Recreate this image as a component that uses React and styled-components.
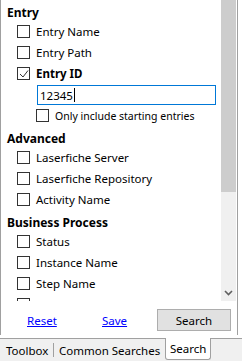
import React from 'react';
import styled, { createGlobalStyle } from 'styled-components';

const GlobalStyle = createGlobalStyle`
  html, body {
    margin: 0;
    padding: 0;
    background: #fff;
  }
  body {
    font-family: "Noto Sans", "Liberation Sans", sans-serif;
    font-size: 11.5px;
    color: #000;
  }
`;

const Frame = styled.div`
  width: 242px;
  height: 361px;
  display: flex;
  flex-direction: column;
  background: #fff;
  overflow: hidden;
`;

const Panel = styled.div`
  height: 335px;
  margin-right: 4px;
  display: flex;
  flex-direction: column;
  border-left: 1px solid #a0a0a0;
  border-right: 1px solid #a0a0a0;
`;

const ScrollArea = styled.div`
  height: 301px;
  display: flex;
`;

const Content = styled.div`
  flex: 1;
  overflow: hidden;
  padding-top: 4px;
`;

const GroupTitle = styled.div`
  font-weight: bold;
  font-size: 12px;
  line-height: 17px;
  padding-left: 6px;
  margin-top: ${(p) => (p.first ? '0' : '4px')};
`;

const Row = styled.label`
  display: flex;
  align-items: center;
  height: 21px;
  padding-left: ${(p) => (p.indent ? '35px' : '16px')};
  font-size: ${(p) => (p.small ? '10.5px' : '11.5px')};
  font-weight: ${(p) => (p.bold ? 'bold' : 'normal')};
  white-space: nowrap;
`;

const Box = styled.span`
  width: 11px;
  height: 11px;
  border: 1px solid #333;
  background: #fff;
  margin-right: 6px;
  flex: none;
  display: flex;
  align-items: center;
  justify-content: center;
`;

const TextBox = styled.div`
  margin: 1px 0 0 36px;
  width: 175px;
  height: 18px;
  border: 1px solid #0078d7;
  display: flex;
  align-items: center;
  padding-left: 2px;
  font-size: 11.5px;
`;

const Caret = styled.span`
  width: 1px;
  height: 14px;
  background: #000;
  margin-left: 1px;
`;

const ScrollBar = styled.div`
  width: 15px;
  margin-right: 1px;
  display: flex;
  flex-direction: column;
  background: #f0f0f0;
`;

const Thumb = styled.div`
  height: 192px;
  background: #cdcdcd;
`;

const ArrowButton = styled.div`
  margin-top: auto;
  height: 17px;
  display: flex;
  align-items: center;
  justify-content: center;
`;

const Footer = styled.div`
  flex: 1;
  display: grid;
  grid-template-columns: 75px 55px 74px;
  align-items: center;
  padding: 8px 0 4px 26px;
`;

const LinkText = styled.a`
  color: #0000ff;
  text-decoration: underline;
  font-size: 11.5px;
  cursor: pointer;
`;

const Button = styled.button`
  height: 22px;
  width: 74px;
  border: 1px solid #adadad;
  background: #e1e1e1;
  font-family: inherit;
  font-size: 11.5px;
  color: #000;
  padding: 0;
`;

const TabStrip = styled.div`
  margin-top: auto;
  height: 22px;
  border-top: 1px solid #a0a0a0;
  background: #f0f0f0;
  display: flex;
  align-items: stretch;
`;

const Tab = styled.div`
  display: flex;
  align-items: center;
  width: ${(p) => p.w}px;
  padding-left: ${(p) => p.pad}px;
  box-sizing: border-box;
  font-size: 11.5px;
  white-space: nowrap;
  ${(p) =>
    p.active &&
    `
    margin-top: -1px;
    height: 22px;
    background: #fff;
    border: 1px solid #a0a0a0;
    border-top: none;
    border-radius: 0 0 3px 3px;
  `}
`;

const Sep = styled.span`
  width: 1px;
  background: #a0a0a0;
  margin: 4px 0 4px;
`;

function Check({ checked }) {
  return (
    <Box>
      {checked && (
        <svg width="10" height="10" viewBox="0 0 10 10">
          <polyline points="1,5 4,8 9,1.5" fill="none" stroke="#333" strokeWidth="1" />
        </svg>
      )}
    </Box>
  );
}

function Option({ label, checked, bold }) {
  return (
    <Row bold={bold}>
      <Check checked={checked} />
      {label}
    </Row>
  );
}

export default function App() {
  return (
    <>
      <GlobalStyle />
      <Frame>
        <Panel>
          <ScrollArea>
            <Content>
              <GroupTitle first>Entry</GroupTitle>
              <Option label="Entry Name" />
              <Option label="Entry Path" />
              <Option label="Entry ID" checked bold />
              <TextBox>
                12345
                <Caret />
              </TextBox>
              <Row indent small>
                <Check />
                Only include starting entries
              </Row>
              <GroupTitle>Advanced</GroupTitle>
              <Option label="Laserfiche Server" />
              <Option label="Laserfiche Repository" />
              <Option label="Activity Name" />
              <GroupTitle>Business Process</GroupTitle>
              <Option label="Status" />
              <Option label="Instance Name" />
              <Option label="Step Name" />
              <Row>
                <Check />
              </Row>
            </Content>
            <ScrollBar>
              <Thumb />
              <ArrowButton>
                <svg width="9" height="6" viewBox="0 0 9 6">
                  <polyline points="1,1 4.5,4.5 8,1" fill="none" stroke="#606060" strokeWidth="1.6" />
                </svg>
              </ArrowButton>
            </ScrollBar>
          </ScrollArea>
          <Footer>
            <span>
              <LinkText>Reset</LinkText>
            </span>
            <span>
              <LinkText>Save</LinkText>
            </span>
            <Button>Search</Button>
          </Footer>
        </Panel>
        <TabStrip>
          <Tab w={53} pad={6}>Toolbox</Tab>
          <Sep />
          <Tab w={111} pad={5}>Common Searches</Tab>
          <Tab w={46} pad={4} active>Search</Tab>
        </TabStrip>
      </Frame>
    </>
  );
}
